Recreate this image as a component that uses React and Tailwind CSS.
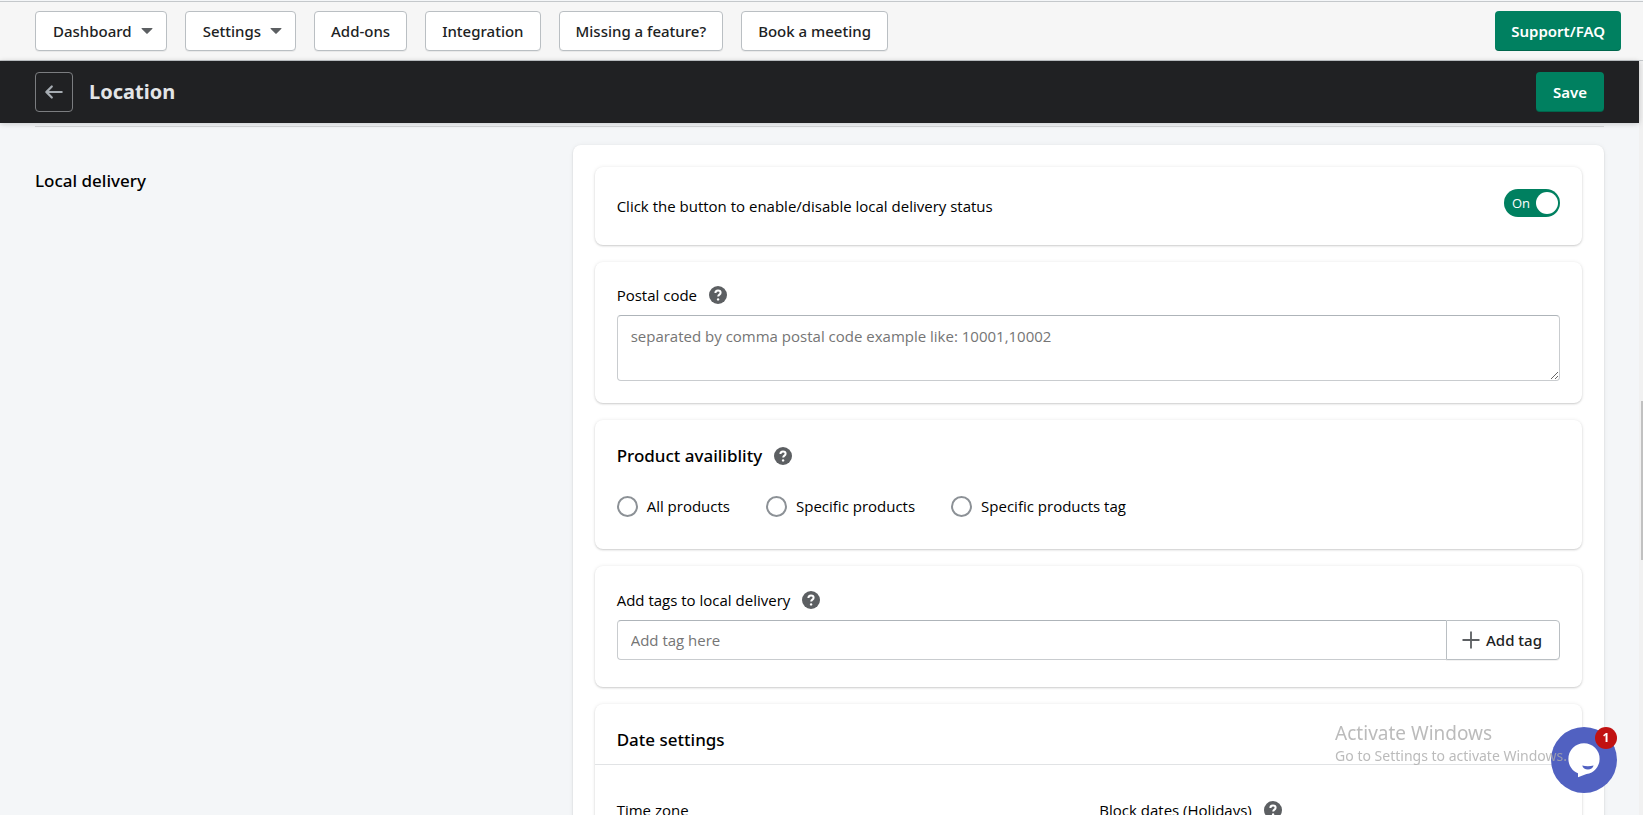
import React, { useState } from 'react';
import clsx from 'clsx';

const navItems = [
  { label: 'Dashboard', menu: true },
  { label: 'Settings', menu: true },
  { label: 'Add-ons' },
  { label: 'Integration' },
  { label: 'Missing a feature?' },
  { label: 'Book a meeting' },
];

const productOptions = [
  { id: 'all', label: 'All products' },
  { id: 'specific', label: 'Specific products' },
  { id: 'tag', label: 'Specific products tag' },
];

const HelpIcon = () => (
  <svg viewBox="0 0 18 18" className="w-[18px] h-[18px] shrink-0" aria-hidden="true">
    <circle cx="9" cy="9" r="9" fill="#5c5f62" />
    <path d="M6.4 7c0-1.6 1.1-2.5 2.6-2.5s2.6.9 2.6 2.2c0 1.9-2.4 1.9-2.4 3.8" fill="none" stroke="#fff" strokeWidth="2" />
    <circle cx="9.1" cy="13.4" r="1.2" fill="#fff" />
  </svg>
);

const CaretIcon = () => (
  <svg viewBox="0 0 12 6" className="w-3 h-[6px]" aria-hidden="true">
    <path d="M1 0h10a.5.5 0 0 1 .4.8L6.6 5.6a.8.8 0 0 1-1.2 0L.6.8A.5.5 0 0 1 1 0z" fill="#5c5f62" />
  </svg>
);

const ArrowLeftIcon = () => (
  <svg viewBox="0 0 20 20" className="w-[22px] h-[22px]" fill="#a6acb2" aria-hidden="true">
    <path d="M17 9H5.414l3.293-3.293a.999.999 0 1 0-1.414-1.414l-5 5a.999.999 0 0 0 0 1.414l5 5a.997.997 0 0 0 1.414 0 .999.999 0 0 0 0-1.414L5.414 11H17a1 1 0 1 0 0-2z" />
  </svg>
);

const PlusIcon = () => (
  <svg viewBox="0 0 18 18" className="w-[18px] h-[18px]" aria-hidden="true">
    <path d="M9 .5v17M.5 9h17" stroke="#5c5f62" strokeWidth="1.8" />
  </svg>
);

const Card = ({ className, children }) => (
  <section className={clsx('rounded-lg bg-white shadow-[0_0_4px_rgba(23,24,24,0.07),0_1px_2px_rgba(0,0,0,0.17)]', className)}>
    {children}
  </section>
);

const App = () => {
  const [enabled, setEnabled] = useState(true);
  const [product, setProduct] = useState('');

  return (
    <div className="flex h-screen flex-col overflow-hidden bg-[#f4f6f8] font-['Open_Sans','Noto_Sans',sans-serif] text-[15px] leading-[22px] text-black">
      {/* Top navigation */}
      <nav className="mt-px flex shrink-0 items-center justify-between border-y border-[#c4c8cb] bg-[#f6f6f6] py-[9px] pl-[35px] pr-[22px] font-['Noto_Sans',sans-serif] font-medium text-[#202223]">
        <div className="flex gap-[18px]">
          {navItems.map((item) => (
            <button
              key={item.label}
              className={clsx(
                'flex h-10 items-center whitespace-nowrap rounded border border-[#babfc3] bg-white shadow-[0_1px_0_rgba(0,0,0,0.05)]',
                item.menu ? 'gap-[9px] pl-[17px] pr-[13px]' : 'px-4'
              )}
            >
              {item.label}
              {item.menu && <CaretIcon />}
            </button>
          ))}
        </div>
        <button className="h-10 rounded bg-[#008060] px-4 font-semibold text-white shadow-[inset_0_-1px_0_rgba(0,0,0,0.2)]">
          Support/FAQ
        </button>
      </nav>

      <div className="flex min-h-0 flex-1">
        <div className="flex min-w-0 flex-1 flex-col">
          {/* Save bar */}
          <header className="z-10 flex shrink-0 items-center justify-between bg-[#202123] px-[35px] py-[11px] font-['Noto_Sans',sans-serif] shadow-[0_0_5px_rgba(23,24,24,0.05),0_1px_6px_rgba(0,0,0,0.15)]">
            <div className="flex items-center gap-4">
              <button aria-label="Back" className="flex h-10 w-[38px] items-center justify-center rounded border border-[#7b7d80]">
                <ArrowLeftIcon />
              </button>
              <h1 className="text-xl font-bold leading-7 text-[#e3e5e7]">Location</h1>
            </div>
            <button className="h-10 rounded bg-[#008060] px-[17px] font-semibold text-white shadow-[inset_0_-1px_0_rgba(0,0,0,0.2)]">
              Save
            </button>
          </header>

          <main className="min-h-0 flex-1 overflow-hidden px-[35px] pt-[3px]">
            <div className="grid grid-cols-[1fr_2fr] gap-x-[22px] border-t border-[#d6d8da] pt-[18px]">
              <h2 className="pt-[22px] font-['Noto_Sans',sans-serif] text-[17px] font-medium leading-7">Local delivery</h2>

              <div className="flex flex-col gap-[17px] rounded-lg bg-white p-[22px] shadow-[0_0_5px_rgba(23,24,24,0.05),0_1px_2px_rgba(0,0,0,0.15)]">
                <Card className="flex items-start justify-between p-[22px]">
                  <p className="leading-[34px]">Click the button to enable/disable local delivery status</p>
                  <label className={clsx('flex h-7 w-14 cursor-pointer items-center justify-between rounded-full pl-2 pr-[2px] text-white', enabled ? 'bg-[#008060]' : 'flex-row-reverse bg-gray-400')}>
                    <input
                      type="checkbox"
                      aria-label="Local delivery status"
                      className="sr-only"
                      checked={enabled}
                      onChange={(e) => setEnabled(e.target.checked)}
                    />
                    <span className="text-[13px]">{enabled ? 'On' : 'Off'}</span>
                    <span className="h-[22px] w-[22px] rounded-full bg-white" />
                  </label>
                </Card>

                <Card className="p-[22px]">
                  <div className="mb-[9px] flex items-center gap-3">
                    <label htmlFor="postal">Postal code</label>
                    <HelpIcon />
                  </div>
                  <textarea
                    id="postal"
                    placeholder="separated by comma postal code example like: 10001,10002"
                    className="block h-[66px] w-full rounded border border-[#c9cccf] border-t-[#aeb4b9] bg-white px-[13px] py-[9px] placeholder-[#757575]"
                  />
                </Card>

                <Card className="px-[22px] pb-8 pt-[22px]">
                  <div className="mb-[25px] flex items-center gap-3">
                    <h3 className="font-['Noto_Sans',sans-serif] text-[17px] font-medium leading-7">Product availiblity</h3>
                    <HelpIcon />
                  </div>
                  <div className="flex gap-9">
                    {productOptions.map((option) => (
                      <label key={option.id} className="flex items-center gap-[9px]">
                        <input
                          type="radio"
                          name="product"
                          className="h-[21px] w-[21px] appearance-none rounded-full border-2 border-[#8c9196] bg-white checked:border-[6px] checked:border-[#008060]"
                          checked={product === option.id}
                          onChange={() => setProduct(option.id)}
                        />
                        {option.label}
                      </label>
                    ))}
                  </div>
                </Card>

                <Card className="px-[22px] pb-[27px] pt-[22px]">
                  <div className="mb-2 flex h-6 items-center gap-3">
                    <label htmlFor="tag">Add tags to local delivery</label>
                    <HelpIcon />
                  </div>
                  <div className="flex h-10">
                    <input
                      id="tag"
                      type="text"
                      placeholder="Add tag here"
                      className="min-w-0 flex-1 rounded-l border border-r-0 border-[#c9cccf] border-t-[#aeb4b9] bg-white px-[13px] placeholder-[#757575]"
                    />
                    <button className="flex items-center gap-[6px] rounded-r border border-[#babfc3] bg-white pl-[15px] pr-[17px] font-['Noto_Sans',sans-serif] font-medium text-[#202223] shadow-[0_1px_0_rgba(0,0,0,0.05)]">
                      <PlusIcon />
                      Add tag
                    </button>
                  </div>
                </Card>

                <Card>
                  <h3 className="border-b border-[#e1e3e5] px-[22px] pb-[10px] pt-[22px] font-['Noto_Sans',sans-serif] text-[17px] font-medium leading-7">
                    Date settings
                  </h3>
                  <div className="grid grid-cols-2 gap-[22px] px-[22px] py-[34px]">
                    <div>Time zone</div>
                    <div className="flex items-center gap-3">
                      Block dates (Holidays)
                      <HelpIcon />
                    </div>
                  </div>
                </Card>
              </div>
            </div>
          </main>
        </div>

        {/* Scroll track */}
        <div className="flex w-1 shrink-0 flex-col items-end bg-[#f1f1f1]" aria-hidden="true">
          <div className="flex-[340]" />
          <div className="w-[2px] flex-[159] bg-[#c1c1c1]" />
          <div className="flex-[255]" />
        </div>
      </div>

      {/* Chat launcher */}
      <button aria-label="Open chat, 1 new message" className="fixed bottom-[22px] right-[26px] z-20 h-[66px] w-[66px] rounded-full bg-[#5161c1]">
        <svg viewBox="0 0 66 66" className="h-full w-full" aria-hidden="true">
          <path d="M33 16.3a15.6 15.6 0 0 0-15.6 15.6c0 6.3 3.8 11.900 9.600 14.400v4l8.500-3.200A15.600 15.600 0 0 0 48.600 31.900 15.600 15.600 0 0 0 33 16.300z" fill="#fff" />
          <path d="M31.200 38.400c3.600 1.100 7.800 1.100 11.400 0-.7 2.600-2.900 4-5.700 4s-5-1.400-5.700-4z" fill="#5161c1" />
        </svg>
        <span className="absolute right-0 top-0 flex h-[22px] w-[22px] items-center justify-center rounded-full bg-[#c11212] text-xs font-bold text-white">
          1
        </span>
      </button>

      <div className="pointer-events-none fixed bottom-12 right-[76px] z-30 font-['Noto_Sans',sans-serif] text-[#aaaaaa]/80">
        <p className="text-[19px] leading-6">Activate Windows</p>
        <p className="text-sm leading-[22px]">Go to Settings to activate Windows.</p>
      </div>
    </div>
  );
};

export default App;
